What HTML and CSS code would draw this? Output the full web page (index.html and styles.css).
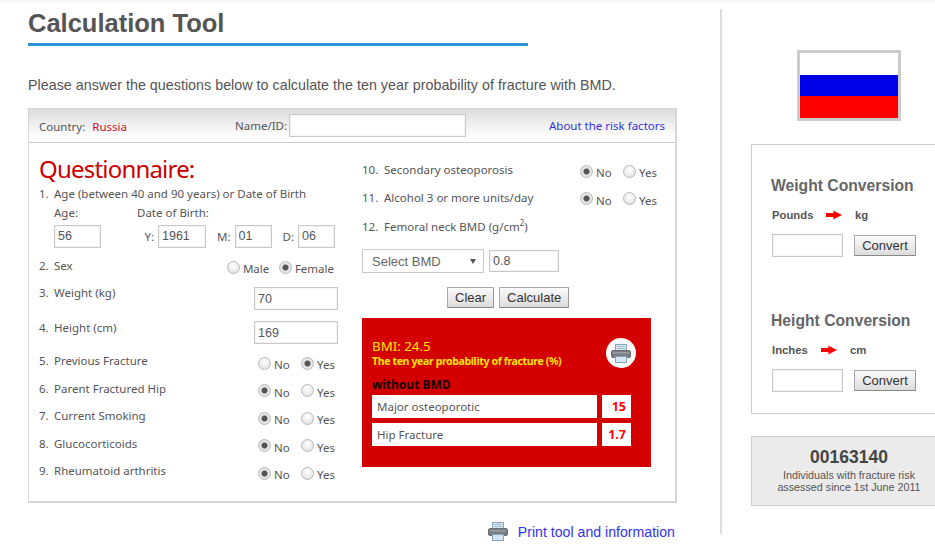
FILE: index.html
```html
<!DOCTYPE html>
<html lang="en">
<head>
<meta charset="utf-8">
<title>Calculation Tool</title>
<link rel="stylesheet" href="styles.css">
</head>
<body>
<svg class="defs" width="0" height="0" aria-hidden="true">
  <defs>
    <symbol id="printer" viewBox="0 0 20 19">
      <rect x="4.5" y="0.5" width="11" height="6" fill="#d5e6f3" stroke="#8aa4b8"/>
      <path d="M6 2.5h8M6 4.5h8" stroke="#a9bfd0"/>
      <rect x="0.5" y="6.5" width="19" height="7" rx="1.5" fill="#777d82" stroke="#6a7075"/>
      <rect x="2" y="8" width="16" height="1.5" fill="#979da2"/>
      <rect x="4.5" y="12.5" width="11" height="6" fill="#d5e6f3" stroke="#8aa4b8"/>
    </symbol>
    <symbol id="arrow" viewBox="0 0 16 10">
      <path d="M0 3h7.500L7 0.500 16 5 7 9.500 7.500 7H0z" fill="#f00"/>
    </symbol>
  </defs>
</svg>
<div class="page">
  <main class="main">
    <h1 class="title">Calculation Tool</h1>
    <p class="intro">Please answer the questions below to calculate the ten year probability of fracture with BMD.</p>
    <form class="tool">
      <div class="tool-head">
        <div class="country"><span>Country:</span><span class="country-name">Russia</span></div>
        <div class="nameid"><label>Name/ID:</label><input class="field field-name" type="text"></div>
        <a class="about" href="#">About the risk factors</a>
      </div>
      <div class="tool-body">
        <div class="col-left">
          <h2 class="quest">Questionnaire:</h2>
          <div class="q q1"><span class="num">1.</span><span>Age (between 40 and 90 years) or Date of Birth</span></div>
          <div class="age-labels"><span class="lab-age">Age:</span><span>Date of Birth:</span></div>
          <div class="age-inputs">
            <input class="field f-age" type="text" value="56">
            <div class="dob">
              <label>Y:</label><input class="field f-y" type="text" value="1961">
              <label class="ml">M:</label><input class="field f-md" type="text" value="01">
              <label class="ml">D:</label><input class="field f-md" type="text" value="06">
            </div>
          </div>
          <div class="q row-sex"><div><span class="num">2.</span><span>Sex</span></div>
            <div class="radios"><input type="radio" name="sex"><span class="rl rl-male">Male</span><input type="radio" name="sex" checked><span class="rl">Female</span></div>
          </div>
          <div class="q row-w"><div><span class="num">3.</span><span>Weight (kg)</span></div><input class="field f-wh" type="text" value="70"></div>
          <div class="q row-h"><div><span class="num">4.</span><span>Height (cm)</span></div><input class="field f-wh" type="text" value="169"></div>
          <div class="q row-r"><div><span class="num">5.</span><span>Previous Fracture</span></div>
            <div class="radios"><input type="radio" name="q5"><span class="rl rl-no">No</span><input type="radio" name="q5" checked><span class="rl">Yes</span></div></div>
          <div class="q row-r"><div><span class="num">6.</span><span>Parent Fractured Hip</span></div>
            <div class="radios"><input type="radio" name="q6" checked><span class="rl rl-no">No</span><input type="radio" name="q6"><span class="rl">Yes</span></div></div>
          <div class="q row-r"><div><span class="num">7.</span><span>Current Smoking</span></div>
            <div class="radios"><input type="radio" name="q7" checked><span class="rl rl-no">No</span><input type="radio" name="q7"><span class="rl">Yes</span></div></div>
          <div class="q row-r"><div><span class="num">8.</span><span>Glucocorticoids</span></div>
            <div class="radios"><input type="radio" name="q8" checked><span class="rl rl-no">No</span><input type="radio" name="q8"><span class="rl">Yes</span></div></div>
          <div class="q row-r"><div><span class="num">9.</span><span>Rheumatoid arthritis</span></div>
            <div class="radios"><input type="radio" name="q9" checked><span class="rl rl-no">No</span><input type="radio" name="q9"><span class="rl">Yes</span></div></div>
        </div>
        <div class="col-right">
          <div class="q row-r2"><div><span class="num n2">10.</span><span>Secondary osteoporosis</span></div>
            <div class="radios"><input type="radio" name="q10" checked><span class="rl rl-no">No</span><input type="radio" name="q10"><span class="rl">Yes</span></div></div>
          <div class="q row-r2"><div><span class="num n2">11.</span><span>Alcohol 3 or more units/day</span></div>
            <div class="radios"><input type="radio" name="q11" checked><span class="rl rl-no">No</span><input type="radio" name="q11"><span class="rl">Yes</span></div></div>
          <div class="q row-12"><span class="num n2">12.</span><span>Femoral neck BMD (g/cm<sup>2</sup>)</span></div>
          <div class="bmd">
            <div class="select-wrap"><select class="select"><option>Select BMD</option></select><span class="caret"></span></div>
            <input class="field f-bmd" type="text" value="0.8">
          </div>
          <div class="actions"><button class="btn" type="button">Clear</button><button class="btn" type="button">Calculate</button></div>
          <section class="result">
            <div class="result-top">
              <div>
                <div class="bmi">BMI: 24.5</div>
                <div class="prob">The ten year probability of fracture (%)</div>
              </div>
              <span class="print-round"><svg width="20" height="19"><use href="#printer"/></svg></span>
            </div>
            <div class="without">without BMD</div>
            <div class="res-row"><span class="res-name">Major osteoporotic</span><span class="res-val">15</span></div>
            <div class="res-row"><span class="res-name">Hip Fracture</span><span class="res-val">1.7</span></div>
          </section>
        </div>
      </div>
    </form>
    <div class="print-line"><svg width="20" height="19"><use href="#printer"/></svg><a href="#">Print tool and information</a></div>
  </main>
  <aside class="side">
    <div class="flag"><div class="fw"></div><div class="fb"></div><div class="fr"></div></div>
    <div class="conv">
      <h3>Weight Conversion</h3>
      <div class="units"><span class="u1">Pounds</span><svg width="16" height="10"><use href="#arrow"/></svg><span>kg</span></div>
      <div class="conv-in"><input class="field f-conv" type="text"><button class="btn btn-conv" type="button">Convert</button></div>
      <h3 class="h2nd">Height Conversion</h3>
      <div class="units"><span class="u2">Inches</span><svg width="16" height="10"><use href="#arrow"/></svg><span>cm</span></div>
      <div class="conv-in"><input class="field f-conv" type="text"><button class="btn btn-conv" type="button">Convert</button></div>
    </div>
    <div class="count">
      <div class="count-n">00163140</div>
      <div class="count-t">Individuals with fracture risk<br>assessed since 1st June 2011</div>
    </div>
  </aside>
</div>
</body>
</html>
```
FILE: styles.css
```css
* { box-sizing: border-box; }
html, body { margin: 0; padding: 0; height: 556px; overflow: hidden; background: #fff; }
body { font-family: "Liberation Sans", Arial, sans-serif; color: #555; border-top: 3px solid #f8f8f8; }
.defs { position: absolute; }
.page { display: flex; width: 935px; overflow: hidden; }

.main { width: 720px; flex: none; padding-left: 28px; }
.title { margin: 0; width: 500px; height: 43px; border-bottom: 3px solid #2b93d9; font-size: 25.500px; line-height: 40px; font-weight: bold; color: #555; }
.intro { margin: 0; padding-top: 31px; height: 62px; font-size: 14.330px; line-height: 17px; color: #555; white-space: nowrap; }

.tool { width: 649px; height: 395px; border: 2px solid #d6d6d6; border-width: 1px 2px 2px 1px; font-family: "Noto Sans", Tahoma, sans-serif; font-size: 11.5px; color: #555; }
.tool-head { display: flex; align-items: center; height: 34px; padding: 0 10px; border-bottom: 1px solid #ccc; background: linear-gradient(#dcdcdc, #fff 85%); }
.country { width: 196px; padding-top: 1px; }
.country-name { margin-left: 7px; color: #c8102e; }
.nameid { display: flex; align-items: center; gap: 2px; margin-bottom: 1px; }
.field { display: block; border: 1px solid #c9c9c9; box-shadow: inset 0 0 0 1px #f4f4f4; background: #fff; padding: 0 3px; margin: 0; font-family: "Liberation Sans", Arial, sans-serif; font-size: 12.500px; color: #555; border-radius: 0; outline: none; }
.field-name { width: 177px; height: 23px; }
.about { margin-left: auto; color: #3333dd; text-decoration: none; }

.tool-body { display: flex; }
.col-left { width: 299px; margin-left: 10px; flex: none; }
.col-right { width: 295px; margin-left: 24px; flex: none; padding-top: 19px; }
.quest { margin: 0; height: 38px; padding-top: 12px; font-size: 24px; letter-spacing: -0.8px; line-height: 28px; font-weight: normal; color: #c00; white-space: nowrap; }
.q { display: flex; }
.num { display: inline-block; width: 15px; }
.n2 { width: 22px; }
.q1 { padding-top: 5px; line-height: 16px; height: 24px; }
.age-labels { display: flex; height: 20px; padding-left: 15px; line-height: 16px; }
.lab-age { width: 83px; }
.age-inputs { display: flex; justify-content: space-between; align-items: center; height: 22px; padding: 0 3px 0 15px; }
.f-age { width: 47px; height: 23px; }
.dob { display: flex; align-items: center; }
.dob label { margin-right: 4px; }
.dob .ml { margin-left: 11px; margin-right: 4px; }
.f-y { width: 48px; height: 23px; }
.f-md { width: 37px; height: 23px; }

.radios { display: flex; align-items: center; height: 16px; margin-top: 2px; }
.radios input { appearance: none; -webkit-appearance: none; width: 13px; height: 13px; margin: 0 3px 0 0; border: 1px solid #b9b9b9; border-radius: 50%; background: radial-gradient(circle at 50% 35%, #fff, #dcdcdc); flex: none; }
.radios input:checked { background: radial-gradient(circle, #555 0 2.5px, #e4e4e4 3.5px, #e8e8e8); }
.rl { position: relative; top: 2px; line-height: 14px; }
.rl-no { width: 27px; }
.rl-male { width: 36px; }

.row-sex { justify-content: space-between; padding: 11px 4px 0 0; line-height: 16px; height: 38px; }
.row-sex .radios { margin-top: 1px; }
.row-w { justify-content: space-between; height: 35px; line-height: 16px; }
.row-w .f-wh { margin-top: 2px; }
.row-h { justify-content: space-between; height: 33px; line-height: 16px; }
.row-h .f-wh { margin-top: 1px; }
.f-wh { width: 84px; height: 23px; }
.row-r { justify-content: space-between; height: 27.5px; line-height: 16px; padding-right: 3px; }

.row-r2 { justify-content: space-between; height: 27.500px; line-height: 16px; }
.row-r2 .radios { margin-top: 1px; }
.row-12 { height: 31px; padding-top: 1px; line-height: 18px; }
.row-12 sup { font-size: 8px; line-height: 0; }
.bmd { display: flex; align-items: center; gap: 5px; height: 24px; margin-top: 1px; }
.select-wrap { position: relative; width: 122px; height: 24px; }
.select { appearance: none; -webkit-appearance: none; width: 100%; height: 24px; padding: 0 9px; border: 1px solid #c9c9c9; background: #fff; border-radius: 0; font-family: "Liberation Sans", Arial, sans-serif; font-size: 13px; color: #666; }
.caret { position: absolute; right: 8px; top: 10px; width: 0; height: 0; border: 3px solid transparent; border-top: 5px solid #555; border-bottom: 0; }
.f-bmd { width: 70px; height: 22px; }
.actions { display: flex; justify-content: flex-start; gap: 5px; padding: 14px 0 10px 85px; height: 45px; }
.btn { height: 21px; padding: 0 7px; border: 1px solid #aaa; border-bottom-color: #888; border-right-color: #999; background: linear-gradient(#fbfbfb, #dcdcdc); font-family: "Liberation Sans", Arial, sans-serif; font-size: 13px; color: #333; border-radius: 1px; }

.result { width: 289px; height: 149px; background: #d40000; padding: 17px 10px 0; }
.result-top { display: flex; justify-content: space-between; width: 264px; height: 39px; }
.bmi { margin-top: 3px; font-size: 13.300px; line-height: 16px; color: #ffe600; }
.prob { font-size: 10.5px; letter-spacing: -0.35px; line-height: 14px; font-weight: bold; color: #ffe600; white-space: nowrap; }
.print-round { display: flex; align-items: center; justify-content: center; width: 30px; height: 30px; margin-top: 3px; border-radius: 50%; background: #fff; }
.without { height: 21px; padding-top: 3px; font-size: 12px; line-height: 16px; font-weight: bold; color: #1a0000; }
.res-row { display: flex; gap: 5px; height: 23px; margin-bottom: 5px; line-height: 23px; }
.res-name { width: 225px; background: #fff; padding-left: 5px; color: #555; }
.res-val { width: 29px; background: #fff; text-align: right; padding-right: 5px; color: #f00; font-weight: bold; font-size: 12.5px; }

.print-line { display: flex; align-items: center; justify-content: flex-end; gap: 10px; width: 647px; margin-top: 19px; font-size: 14.150px; }
.print-line a { color: #3333ee; text-decoration: none; }

.side { flex: none; width: 215px; margin-top: 6px; height: 525px; border-left: 2px solid #ddd; padding-left: 29px; overflow: hidden; }
.flag { width: 104px; height: 71px; margin: 41px 0 23px 46px; border: 3px solid #ccc; display: flex; flex-direction: column; }
.fw { flex: 1; background: #fff; }
.fb { flex: 1; background: #0000e6; }
.fr { flex: 1; background: #f00; }
.conv { width: 200px; height: 270px; border: 1px solid #ccc; padding: 31px 19px 0; color: #555; }
.conv h3 { margin: 0; font-size: 15.700px; line-height: 20px; color: #666; }
.conv .h2nd { margin-top: 54px; }
.units { display: flex; align-items: center; height: 16px; margin-top: 11px; padding-left: 1px; font-size: 11.300px; font-weight: bold; }
.u1 { width: 54px; }
.u2 { width: 49px; }
.units svg { margin-right: 13px; }
.conv-in { display: flex; align-items: center; margin-top: 11px; padding-left: 1px; gap: 11px; }
.f-conv { width: 71px; height: 23px; }
.btn-conv { width: 62px; padding: 0; flex: none; }
.count { width: 196px; height: 70px; margin-top: 22px; background: #ebebeb; border: 1px solid #ccc; text-align: center; padding-top: 10px; }
.count-n { font-size: 17.500px; line-height: 20px; font-weight: bold; color: #444; }
.count-t { margin-top: 2px; font-size: 10.750px; line-height: 12px; color: #555; }
```
